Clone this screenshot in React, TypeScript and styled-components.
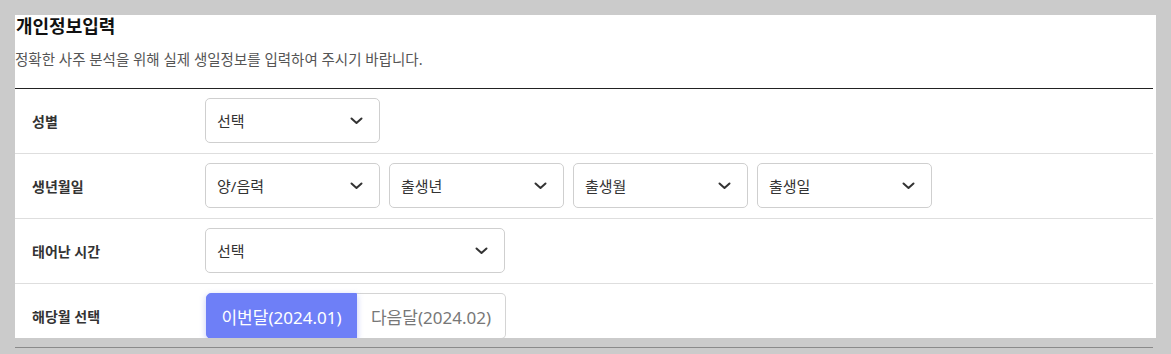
import React from 'react'
import styled, { createGlobalStyle } from 'styled-components'

const GlobalStyle = createGlobalStyle`
  html, body {
    margin: 0;
    padding: 0;
    background: #cbcbcb;
    font-family: "Noto Sans", "Noto Sans CJK KR", sans-serif;
    color: #222;
  }
`

const Chevron = () => (
  <svg width="13" height="8" viewBox="0 0 13 8" fill="none">
    <path d="M1.5 1.5 L6.5 6 L11.5 1.5" stroke="#333" strokeWidth="2" strokeLinecap="round" strokeLinejoin="round" />
  </svg>
)

const Select = ({ label, width = 175 }: { label: string; width?: number }) => (
  <SelectBox $width={width}>
    <span>{label}</span>
    <Chevron />
  </SelectBox>
)

const Row = ({ title, children }: { title: string; children: React.ReactNode }) => (
  <RowWrap>
    <Label>{title}</Label>
    <Field>{children}</Field>
  </RowWrap>
)

const App = () => {
  return (
    <Page>
      <GlobalStyle />
      <Panel>
        <Header>
          <Title>개인정보입력</Title>
          <Desc>정확한 사주 분석을 위해 실제 생일정보를 입력하여 주시기 바랍니다.</Desc>
        </Header>
        <Table>
          <Row title="성별">
            <Select label="선택" />
          </Row>
          <Row title="생년월일">
            <Select label="양/음력" />
            <Select label="출생년" />
            <Select label="출생월" />
            <Select label="출생일" />
          </Row>
          <Row title="태어난 시간">
            <Select label="선택" width={300} />
          </Row>
          <Row title="해당월 선택">
            <Toggle>
              <ToggleBtn $active>이번달(2024.01)</ToggleBtn>
              <ToggleBtn>다음달(2024.02)</ToggleBtn>
            </Toggle>
          </Row>
        </Table>
      </Panel>
      <BottomRule />
    </Page>
  )
}

export default App

const Page = styled.div`
  padding: 15px 15px 0 15px;
  height: 354px;
  box-sizing: border-box;
  overflow: hidden;
`

const Panel = styled.div`
  background: #fff;
  padding-right: 3px;
  height: 323px;
  overflow: hidden;
`

const Header = styled.div`
  height: 74px;
  border-bottom: 1px solid #222;
  box-sizing: border-box;
`

const Title = styled.h2`
  margin: 0;
  padding-left: 1px;
  font-size: 18px;
  line-height: 22px;
  font-weight: 700;
  color: #111;
`

const Desc = styled.p`
  margin: 13px 0 0 0;
  font-size: 14.5px;
  line-height: 19px;
  color: #555;
`

const Table = styled.div`
  display: flex;
  flex-direction: column;
`

const RowWrap = styled.div`
  display: flex;
  align-items: center;
  height: 65px;
  box-sizing: border-box;
  border-bottom: 1px solid #dedede;
  padding-bottom: 1px;

  &:last-child {
    border-bottom: none;
    height: 55px;
    padding: 9px 0 0 0;
  }
`

const Label = styled.div`
  width: 190px;
  padding-left: 17px;
  box-sizing: border-box;
  font-size: 14px;
  font-weight: 700;
  color: #333;
  flex-shrink: 0;
`

const Field = styled.div`
  display: flex;
  gap: 9px;
  align-items: center;
`

const SelectBox = styled.div<{ $width: number }>`
  width: ${p => p.$width}px;
  height: 45px;
  box-sizing: border-box;
  border: 1px solid #cfcfcf;
  border-radius: 5px;
  display: flex;
  align-items: center;
  justify-content: space-between;
  padding: 0 16px 0 11px;
  font-size: 15px;
  color: #333;
  background: #fff;
`

const Toggle = styled.div`
  display: flex;
  height: 46px;
  margin-left: 1px;
`

const ToggleBtn = styled.div<{ $active?: boolean }>`
  height: 100%;
  box-sizing: border-box;
  display: flex;
  align-items: center;
  justify-content: center;
  font-size: 17px;
  width: ${p => (p.$active ? 151 : 149)}px;
  white-space: nowrap;
  color: ${p => (p.$active ? '#fff' : '#777')};
  background: ${p => (p.$active ? '#6e7ff7' : '#fff')};
  border: 1px solid ${p => (p.$active ? '#6e7ff7' : '#d4d4d4')};
  border-radius: ${p => (p.$active ? '5px 0 0 5px' : '0 5px 5px 0')};
  border-left: ${p => (p.$active ? '1px solid #6e7ff7' : 'none')};
  box-shadow: ${p => (p.$active ? '0 2px 6px rgba(80, 100, 230, 0.35)' : 'none')};
  position: relative;
  z-index: ${p => (p.$active ? 1 : 0)};
`

const BottomRule = styled.div`
  margin-top: 9px;
  margin-right: 3px;
  height: 1px;
  background: #8a8a8a;
`
